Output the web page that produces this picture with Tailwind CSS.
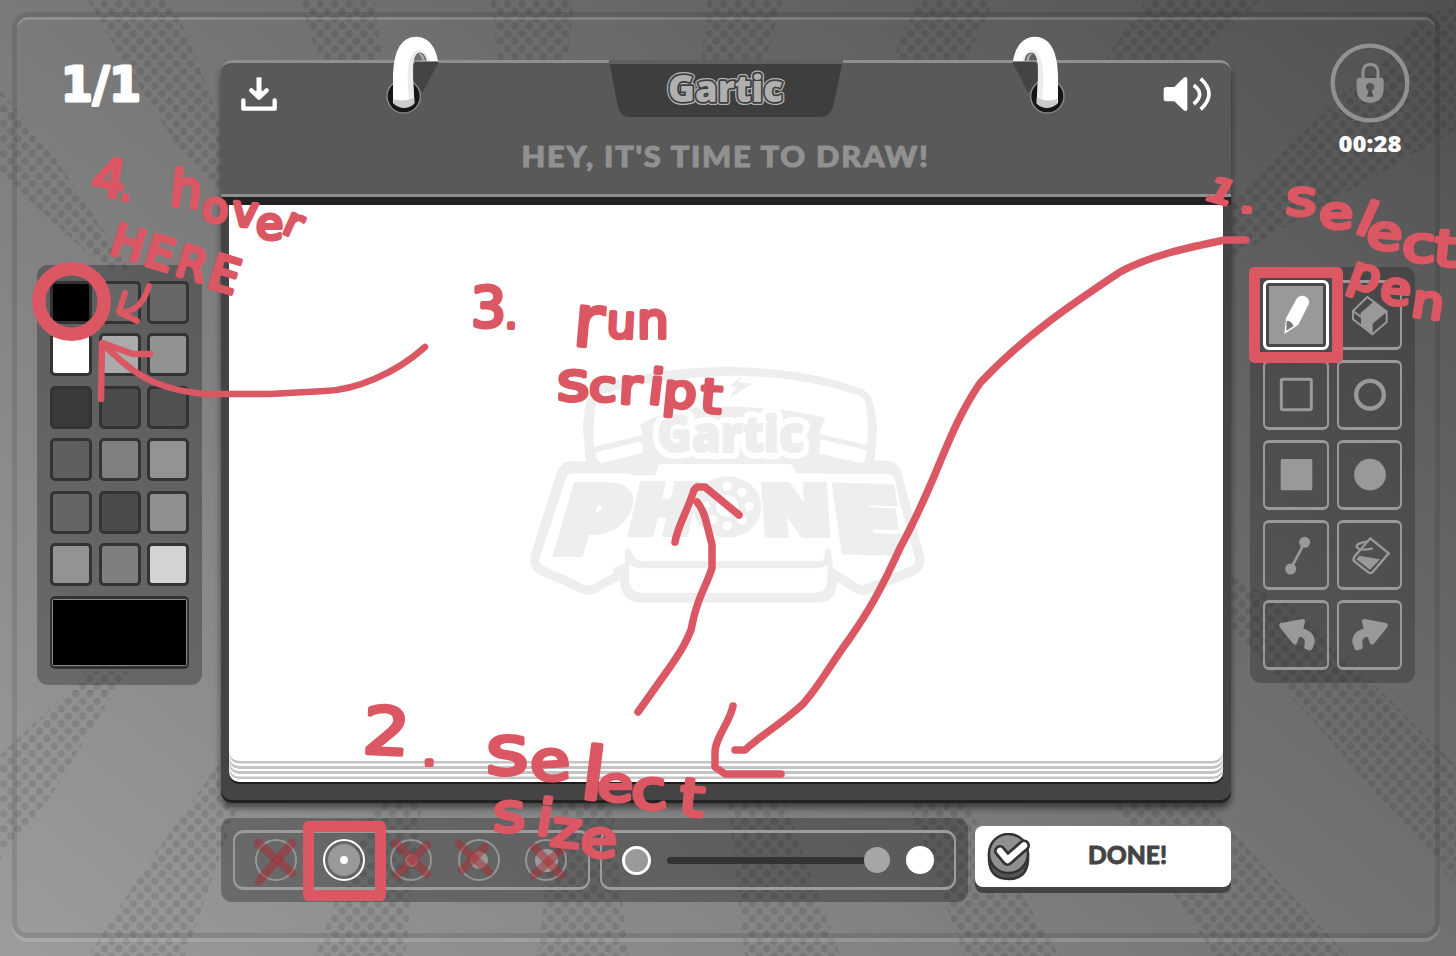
<!DOCTYPE html>
<html lang="en">
<head>
<meta charset="utf-8">
<title>Gartic Phone</title>
<script src="https://cdn.jsdelivr.net/npm/@tailwindcss/browser@4"></script>
</head>
<body class="font-[Lato,'Open_Sans',sans-serif]">
<div class="relative h-[956px] w-[1456px] overflow-hidden bg-[linear-gradient(39deg,#9c9c9c_0%,#505050_100%)]">

  <!-- halftone rays -->
  <svg class="absolute inset-0" width="1456" height="956" viewBox="0 0 1456 956">
    <defs>
      <pattern id="dots" width="14.4" height="15" patternUnits="userSpaceOnUse">
        <g fill="#000" fill-opacity=".1"><circle cx="3.6" cy="3.75" r="3.7"/><circle cx="10.8" cy="11.25" r="3.7"/></g>
      </pattern>
    </defs>
    <g fill="url(#dots)">
      <path d="M88 0H172L197 60L221 125V197L180 150L122 60Z"/>
      <path d="M300 0H375L382 60H318Z"/><path d="M491 0H574L568 60H498Z"/>
      <path d="M708 0H782L766 60H701Z"/><path d="M916 0H995L965 60H893Z"/>
      <path d="M1145 0H1260L1195 60H1105Z"/>
      <path d="M1425 18L1456 0V130L1231 258V200Z"/>
      <path d="M0 90L50 150L130 270L105 268L0 175Z"/>
      <path d="M70 690H115L52 795L0 860V755Z"/><path d="M130 671H85L70 692H113Z"/>
      <path d="M220 762V800H240L185 956H88L150 860Z"/>
      <path d="M375 803H422L405 956H315L350 860Z"/><path d="M555 803H612L628 956H538Z"/>
      <path d="M728 803H785L840 956H745Z"/><path d="M908 803H965L1060 956H965Z"/>
      <path d="M1112 803H1205L1348 956H1215Z"/>
      <path d="M1231 577L1300 610L1456 765V885L1231 627Z"/>
    </g>
  </svg>

  <!-- screen frame -->
  <div class="absolute top-3 right-4 bottom-[18px] left-3 rounded-2xl border-[5px] border-black/10 shadow-[0_4px_0_rgba(255,255,255,0.15),inset_0_3px_0_rgba(255,255,255,0.16)]"></div>

  <main class="relative flex h-full gap-[19px] px-[37px]">
    <!-- left column -->
    <aside class="w-[165px]">
      <div class="flex h-[265px] pt-[48px] pl-[21px]">
        <svg width="88" height="70" viewBox="0 0 88 70"><text x="3" y="52.500" textLength="80" lengthAdjust="spacingAndGlyphs" font-family="DejaVu Sans" font-weight="700" font-size="48" fill="#fff" stroke="#fff" stroke-width="3" stroke-linejoin="round">1/1</text></svg>
      </div>
      <div class="h-[420px] rounded-[11px] bg-black/27 px-[13px] pt-[16px]">
        <div class="grid grid-cols-[42px_42px_42px] gap-x-[6.500px] gap-y-[9.400px]">
          <i class="h-[43px] rounded-[5px] border-[3px] border-[#333] bg-black"></i>
          <i class="h-[43px] rounded-[5px] border-[3px] border-[#333] bg-[#666]"></i>
          <i class="h-[43px] rounded-[5px] border-[3px] border-[#333] bg-[#666]"></i>
          <i class="h-[43px] rounded-[5px] border-[3px] border-[#333] bg-white"></i>
          <i class="h-[43px] rounded-[5px] border-[3px] border-[#333] bg-[#ababab]"></i>
          <i class="h-[43px] rounded-[5px] border-[3px] border-[#333] bg-[#929292]"></i>
          <i class="h-[43px] rounded-[5px] border-[3px] border-[#333] bg-[#3a3a3a]"></i>
          <i class="h-[43px] rounded-[5px] border-[3px] border-[#333] bg-[#4b4b4b]"></i>
          <i class="h-[43px] rounded-[5px] border-[3px] border-[#333] bg-[#505050]"></i>
          <i class="h-[43px] rounded-[5px] border-[3px] border-[#333] bg-[#5f5f5f]"></i>
          <i class="h-[43px] rounded-[5px] border-[3px] border-[#333] bg-[#808080]"></i>
          <i class="h-[43px] rounded-[5px] border-[3px] border-[#333] bg-[#939393]"></i>
          <i class="h-[43px] rounded-[5px] border-[3px] border-[#333] bg-[#656565]"></i>
          <i class="h-[43px] rounded-[5px] border-[3px] border-[#333] bg-[#4b4b4b]"></i>
          <i class="h-[43px] rounded-[5px] border-[3px] border-[#333] bg-[#8f8f8f]"></i>
          <i class="h-[43px] rounded-[5px] border-[3px] border-[#333] bg-[#939393]"></i>
          <i class="h-[43px] rounded-[5px] border-[3px] border-[#333] bg-[#7f7f7f]"></i>
          <i class="h-[43px] rounded-[5px] border-[3px] border-[#333] bg-[#d3d3d3]"></i>
        </div>
        <div class="mt-[10px] h-[73px] w-[139px] rounded-[5px] border-[3px] border-x-2 border-[#333] bg-[#888] p-px"><div class="h-full bg-black"></div></div>
      </div>
    </aside>

    <!-- board column -->
    <section class="w-[1010px] pt-[60px]">
      <div class="relative h-[740px] rounded-[11px] bg-[#444] shadow-[0_3px_0_#222,0_8px_7px_0_rgba(0,0,0,0.5)]">
        <header class="relative h-[137px] rounded-t-[11px] border-y-[3px] border-[#8f8f8f] bg-[#595959]">
          <div class="flex justify-between pr-[18px] pl-[20px]">
            <svg class="mt-[14px]" width="36" height="35" viewBox="723 231 108 105" fill="none" stroke="#fff" stroke-linejoin="round"><path d="M777 232V285" stroke-width="15"/><path d="M754 271L777 293L800 271" stroke-width="13" stroke-linecap="round"/><path d="M765 272H789L777 290Z" fill="#fff" stroke="none"/><path d="M730 301V326H824V301" stroke-width="13" stroke-linecap="round"/></svg>
            <svg class="mt-[14px]" width="50" height="35" viewBox="490 231 150 105" fill="#fff"><path d="M500 261H524L552 233Q563 228 563 238V326Q563 336 552 331L524 304H500Q492 304 492 296V269Q492 261 500 261Z"/><path d="M582 256Q618 282 582 312M603 236Q653 282 603 328" fill="none" stroke="#fff" stroke-width="11"/></svg>
          </div>
          <svg class="absolute -top-[3px] left-[388px]" width="234" height="57" viewBox="0 0 234 57">
            <path d="M0 0H234L224 47Q221 57 211 57H21Q11 57 9 47Z" fill="#3e3e3e"/><path d="M0 0H234L233 4H1Z" fill="#606060"/>
            <g font-family="Open Sans" font-weight="800" font-size="37" stroke-linejoin="round">
              <text x="59" y="42" textLength="115" lengthAdjust="spacingAndGlyphs" fill="#b5b5b5" stroke="#b5b5b5" stroke-width="6">Gartic</text>
              <text x="59" y="42" textLength="115" lengthAdjust="spacingAndGlyphs" fill="#3e3e3e" stroke="#3e3e3e" stroke-width="3.500">Gartic</text>
              <text x="59" y="42" textLength="115" lengthAdjust="spacingAndGlyphs" fill="#b0b0b0">Gartic</text>
            </g>
          </svg>
          <svg class="absolute top-[78px] left-[295px]" width="420" height="36" viewBox="0 0 420 36"><text x="5.500" y="25.500" textLength="408" lengthAdjust="spacingAndGlyphs" letter-spacing="1.6" font-family="Lato" font-weight="900" font-size="27.500" fill="#919191" stroke="#919191" stroke-width="1" stroke-linejoin="round">HEY, IT'S TIME TO DRAW!</text></svg>
        </header>
        <div class="h-2 bg-[#222]"></div>
        <div class="relative mx-2 h-[556px] rounded-b-[10px] bg-white shadow-[0_2.5px_0_#c4c4c4,0_5px_0_#fff,0_8px_0_#c4c4c4,0_10px_0_#fff,0_13px_0_#c4c4c4,0_15.500px_0_#fff,0_18px_0_#c4c4c4,0_21px_0_#fff,0_23px_0_#1c1c1c]">
          <svg class="absolute top-[145px] left-[271px]" width="460" height="280" viewBox="0 0 1380 840">
            <path fill="#eee" d="M258 335L249 240Q250 180 262 145Q270 120 300 106Q460 52 690 51Q930 55 1085 117Q1108 128 1116 150Q1130 200 1131 240L1123 332H1160Q1190 334 1202 360L1272 615Q1280 655 1245 675L1105 732Q1085 740 1065 728L1011 695Q1010 758 950 758H420Q362 756 360 690L285 730Q265 740 245 730L115 672Q85 655 92 615L170 368Q182 335 215 332Z"/>
            <g fill="#fff">
              <path d="M282 288Q278 210 290 155Q294 138 320 130Q500 78 712 77L725 92L755 102L690 145L710 110L700 90ZM712 77Q920 80 1080 138Q1095 145 1098 165Q1108 230 1101 285L960 253Q962 225 978 204Q850 172 690 170Q520 172 408 198Q425 230 428 255L282 290Q276 210 290 155Q294 135 320 128Q500 80 712 77Z"/>
              <path d="M286 307L420 275Q432 280 427 310L305 339Q290 340 286 307ZM960 268L1100 300Q1098 340 1085 340L958 311Z"/>
              <path d="M200 380Q205 370 220 370H380Q395 372 400 376H465L474 350Q478 342 490 342H870Q880 342 888 370H970L990 372H1165Q1180 373 1185 388L1198 450L1245 625Q1248 640 1235 648L1100 703Q1085 708 1070 700L1000 655L992 600Q980 590 975 600V615Q975 633 955 633H425Q400 633 390 595L375 600V640L340 655V670L280 703Q265 710 250 703L125 645Q115 640 119 625Z"/>
              <path d="M388 643Q400 655 430 655H950Q975 653 982 643V695Q978 727 945 729H425Q390 727 387 690Z"/>
            </g>
            <path fill="#eee" d="M725 78L715 95L755 102L688 146L708 112L690 108Z"/>
            <g font-family="Open Sans" font-weight="800" font-size="146" stroke-linejoin="round">
              <text x="472" y="306" textLength="440" lengthAdjust="spacingAndGlyphs" fill="#fff" stroke="#fff" stroke-width="42">Gartic</text>
              <text x="472" y="306" textLength="440" lengthAdjust="spacingAndGlyphs" fill="#eee" stroke="#eee" stroke-width="6">Gartic</text>
            </g>
            <g fill="#eee" stroke="#eee" stroke-width="24" font-family="Open Sans" font-weight="800">
              <text transform="translate(150 610) skewX(-16)" font-size="280" textLength="205" lengthAdjust="spacingAndGlyphs">P</text>
              <text transform="translate(380 550) skewX(-13)" font-size="202" textLength="190" lengthAdjust="spacingAndGlyphs">H</text>
              <text transform="translate(790 552) skewX(4)" font-size="202" textLength="205" lengthAdjust="spacingAndGlyphs">N</text>
              <text transform="translate(1012 600) skewX(8) skewY(2)" font-size="268" textLength="200" lengthAdjust="spacingAndGlyphs">E</text>
            </g>
            <ellipse cx="682" cy="471" rx="102" ry="92" fill="#eee"/>
            <g fill="#fff"><circle cx="682" cy="409" r="14"/><circle cx="726" cy="427" r="14"/><circle cx="748" cy="469" r="14"/><circle cx="726" cy="510" r="14"/><circle cx="682" cy="527" r="14"/><circle cx="638" cy="509" r="14"/><circle cx="617" cy="469" r="14"/><circle cx="639" cy="427" r="14"/><circle cx="682" cy="468" r="33"/></g>
          </svg>
        </div>
        <!-- binder rings -->
        <svg class="absolute -top-[27px] left-[162px]" width="60" height="84" viewBox="1150 100 180 252">
          <g id="ring"><path d="M1245 187H1317L1270 278L1240 260Z" fill="#444"/><circle cx="1212" cy="290" r="50" fill="#161616" stroke="#8c8c8c" stroke-width="4"/><path d="M1180 310V225Q1184 111 1250 111Q1302 113 1315 184H1283Q1278 158 1258 158Q1240 162 1239 215L1244 310Q1225 332 1180 310Z" fill="#fff"/><path d="M1182 298Q1212 310 1244 292V312Q1214 338 1182 312Z" fill="#ccc"/><path d="M1224 250Q1222 156 1256 150Q1276 148 1290 183H1281Q1276 158 1258 158Q1240 162 1239 215L1242 290L1228 298Z" fill="#ececec"/><path d="M1254 161Q1272 160 1276 183H1268Q1265 168 1254 161Z" fill="#aaa"/></g>
        </svg>
        <svg class="absolute -top-[27px] left-[787px] -scale-x-100" width="60" height="84" viewBox="1150 100 180 252"><use href="#ring"/></svg>
      </div>

      <!-- bottom bar -->
      <div class="mt-[18px] flex items-start gap-[7px]">
        <div class="flex h-[84px] w-[747px] gap-[10px] rounded-[11px] bg-black/28 px-3 py-3">
          <div class="flex h-[60px] w-[357px] items-center gap-[25.500px] rounded-[11px] border-x-2 border-y-[3px] border-[#9c9c9c] pl-5">
            <i class="flex size-[42px] items-center justify-center rounded-full border-2 border-[#969696]"><b class="size-[3px] rounded-full bg-[#999]"></b></i>
            <i class="flex size-[42px] items-center justify-center rounded-full border-2 border-white p-[3px]"><b class="flex size-full items-center justify-center rounded-full bg-[#999]"><b class="size-2 rounded-full bg-white"></b></b></i>
            <i class="flex size-[42px] items-center justify-center rounded-full border-2 border-[#969696]"><b class="size-[13px] rounded-full bg-[#999]"></b></i>
            <i class="flex size-[42px] items-center justify-center rounded-full border-2 border-[#969696]"><b class="size-[18px] rounded-full bg-[#999]"></b></i>
            <i class="flex size-[42px] items-center justify-center rounded-full border-2 border-[#969696]"><b class="size-[23px] rounded-full bg-[#999]"></b></i>
          </div>
          <div class="flex h-[60px] w-[357px] items-center rounded-[11px] border-x-2 border-y-[3px] border-[#9c9c9c] pl-[20px]">
            <i class="size-[29px] rounded-full border-[3px] border-white bg-[#999]"></i>
            <i class="ml-4 h-[7px] w-[202px] rounded-full bg-[#333]"></i>
            <i class="-ml-[5px] size-[26px] rounded-full bg-[#a6a6a6]"></i>
            <i class="ml-[16px] size-[28px] rounded-full bg-white"></i>
          </div>
        </div>
        <button class="mt-2 flex h-[61px] w-[256px] items-center rounded-[8px] bg-white pl-[12px] shadow-[0_6px_0_#444]">
          <svg width="44" height="48" viewBox="0 0 44 48"><path d="M2 21.500V27Q3 46 21.500 46Q40 46 41 27V21.500Z" fill="#555" stroke="#333" stroke-width="2.500"/><circle cx="21.500" cy="20.500" r="19.500" fill="#8f8f8f" stroke="#333" stroke-width="2.500"/><path d="M13 18L20.500 27L37 12.500" fill="none" stroke="#333" stroke-width="12" stroke-linecap="round" stroke-linejoin="round"/><path d="M13 18L20.500 27L37 12.500" fill="none" stroke="#fff" stroke-width="6.500" stroke-linecap="round" stroke-linejoin="round"/></svg>
          <svg class="ml-[53px]" width="90" height="34" viewBox="0 0 90 34"><text x="4" y="24" textLength="79" lengthAdjust="spacingAndGlyphs" font-family="Lato" font-weight="900" font-size="24.500" fill="#444" stroke="#444" stroke-width=".8" stroke-linejoin="round">DONE!</text></svg>
        </button>
      </div>
    </section>

    <!-- right column -->
    <aside class="w-[165px]">
      <div class="flex h-[267px] flex-col items-center pt-[43px] pl-[74px]">
        <svg width="80" height="80" viewBox="988 129 240 240"><circle cx="1108" cy="249" r="112" fill="none" stroke="#919191" stroke-width="13"/><path d="M1087 238V213Q1089 194 1109 193Q1130 194 1132 213V238" fill="none" stroke="#919191" stroke-width="9"/><path fill-rule="evenodd" d="M1075 234H1142Q1149 234 1149 241V268Q1147 307 1108 309Q1070 307 1068 268V241Q1068 234 1075 234ZM1104 273L1098 290H1119L1113 273Q1121 269 1121 261Q1119 249 1108 248Q1096 250 1096 261Q1097 270 1104 273Z" fill="#919191"/></svg>
        <div class="mt-[9px]"><svg class="overflow-visible" width="70" height="26" viewBox="0 0 70 26"><text x="3.500" y="20" textLength="63" lengthAdjust="spacingAndGlyphs" font-family="Open Sans" font-weight="800" font-size="23.500" fill="#fff">00:28</text></svg></div>
      </div>
      <div class="grid h-[416px] grid-cols-[66px_65px] content-start gap-x-2 gap-y-[10px] rounded-[11px] bg-black/22 px-[13px] pt-[13px] text-[#999]">
        <div class="flex h-[70px] rounded-[6px] border-[3px] border-white bg-[#999] shadow-[inset_0_0_0_3px_#484848]"><svg class="size-full" viewBox="258 99 180 192"><path d="M313 252L318 205L349 148Q357 134 373 138Q391 145 386 163L355 224Z" fill="#fff"/><path d="M320 212Q334 212 341 228L319 242Z" fill="#777"/></svg></div>
        <div class="h-[70px] rounded-[6px] border-x-2 border-y-[3px]"><svg class="size-full" viewBox="477 99 183 192"><path d="M562 141L620 185V216L577 253L519 208V183Z" fill="none" stroke="currentColor" stroke-width="6" stroke-linejoin="round"/><path d="M582 154L621 185L578 221V255L543 228V196L541 190Z" fill="currentColor"/><path d="M519 183L545 202" fill="none" stroke="currentColor" stroke-width="6"/></svg></div>
        <div class="h-[70px] rounded-[6px] border-x-2 border-y-[3px]"><svg class="size-full" viewBox="255 339 186 192"><rect x="304" y="388" width="90" height="91" rx="4" fill="none" stroke="currentColor" stroke-width="9"/></svg></div>
        <div class="h-[70px] rounded-[6px] border-x-2 border-y-[3px]"><svg class="size-full" viewBox="477 339 183 192"><circle cx="570" cy="434" r="41.500" fill="none" stroke="currentColor" stroke-width="13"/></svg></div>
        <div class="h-[70px] rounded-[6px] border-x-2 border-y-[3px]"><svg class="size-full" viewBox="255 579 186 192"><rect x="302" y="627" width="95" height="94" rx="5" fill="currentColor"/></svg></div>
        <div class="h-[70px] rounded-[6px] border-x-2 border-y-[3px]"><svg class="size-full" viewBox="477 579 183 192"><circle cx="570" cy="674" r="47.500" fill="currentColor"/></svg></div>
        <div class="h-[70px] rounded-[6px] border-x-2 border-y-[3px]"><svg class="size-full" viewBox="255 819 186 192"><path d="M332 957L374 877" stroke="currentColor" stroke-width="8"/><circle cx="374" cy="877" r="16.500" fill="currentColor"/><circle cx="332" cy="957" r="16.500" fill="currentColor"/></svg></div>
        <div class="h-[70px] rounded-[6px] border-x-2 border-y-[3px]"><svg class="size-full" viewBox="477 819 183 192" fill="none" stroke="currentColor" stroke-width="7"><path d="M571 865L626 910L577 967Q571 972 565 967L524 935Q518 930 523 920Z"/><path d="M565 874Q528 880 530 890Q535 904 578 895"/><path d="M538 917L600 928L570 959L529 928Z" fill="currentColor" stroke="none"/></svg></div>
        <div class="h-[70px] rounded-[6px] border-x-2 border-y-[3px]"><svg class="size-full" viewBox="255 1059 186 192"><path d="M302 1119L368 1107Q376 1107 375 1115L370 1136Q405 1145 404 1177L398 1195Q395 1202 387 1201L376 1197Q371 1194 373 1188Q380 1162 358 1160L351 1180Q346 1188 339 1181L299 1131Q295 1122 302 1119Z" fill="currentColor"/></svg></div>
        <div class="h-[70px] rounded-[6px] border-x-2 border-y-[3px]"><svg class="size-full" viewBox="477 1059 183 192"><path d="M619 1119L553 1107Q545 1107 546 1115L551 1136Q516 1145 517 1177L523 1195Q526 1202 534 1201L545 1197Q550 1194 548 1188Q541 1162 563 1160L570 1180Q575 1188 582 1181L622 1131Q626 1122 619 1119Z" fill="currentColor"/></svg></div>
      </div>
    </aside>
  </main>

  <!-- red marker annotations -->
  <svg class="absolute inset-0" width="1456" height="956" viewBox="0 0 1456 956">
    <g fill="none" stroke="#da5763" stroke-width="7.500" stroke-linecap="round" stroke-linejoin="round">
      <path d="M1246 240H1225C1185 248 1150 256 1120 272C1075 302 1025 335 980 383C945 435 940 475 900 548C880 592 868 612 850 638C830 665 820 685 803 704C780 725 765 732 745 750H735"/>
      <path d="M733 706C730 722 715 738 715 752V767L725 774H781"/>
      <path d="M638 712L670 667C680 652 685 645 691 630C698 595 704 592 712 568V545C706 520 704 510 697 502M675 542C678 525 688 510 694 490L697 487H705L739 515"/>
      <path d="M425 347C395 374 355 390 325 391L270 394H205C150 389 130 370 104 345M150 354H133L102 343L101 399" stroke-width="6.500"/>
      <path d="M149 286C143 305 135 311 120 313M125 293L119 312L137 321" stroke-width="6"/>
      <circle cx="71.500" cy="301.500" r="32.700" stroke-width="13.500"/>
      <rect x="1254.500" y="272.500" width="83" height="85" stroke-width="11"/>
      <rect x="308.500" y="826.500" width="72" height="69" stroke-width="11"/>
    </g>
    <g stroke="#aa2c34" stroke-opacity=".5" stroke-width="8.500" stroke-linecap="round" fill="none">
      <path d="M258 843L292 873"/><path d="M292 843L259 881"/>
      <path d="M396 843L427 874"/><path d="M427 845L397 875"/>
      <path d="M459 844L489 872"/><path d="M485 847L462 870"/>
      <path d="M534 847L561 875"/><path d="M563 848L534 875"/>
    </g>
    <g font-family="DejaVu Sans" fill="#da5763" stroke="#da5763" stroke-width="4" stroke-linejoin="round">
      <text><tspan x="90" y="193" font-size="52" rotate="10">4</tspan><tspan x="119" y="200" font-size="38">.</tspan></text>
      <text><tspan x="169" y="205" font-size="50" rotate="6">h</tspan><tspan x="202" y="222" font-size="43">o</tspan><tspan x="231" y="225" font-size="43" rotate="6">v</tspan><tspan x="256" y="239" font-size="44">e</tspan><tspan x="281" y="232" font-size="40" rotate="24">r</tspan></text>
      <text><tspan x="108" y="253" font-size="44" rotate="17">H</tspan><tspan x="142" y="264" font-size="44" rotate="17">E</tspan><tspan x="173" y="274" font-size="44" rotate="17">R</tspan><tspan x="205" y="286" font-size="48" rotate="17">E</tspan></text>
      <text transform="translate(1203 198) scale(1.35 1)"><tspan x="0" y="0" font-size="32" rotate="22">1</tspan><tspan x="26.500" y="14" font-size="36">.</tspan></text>
      <text transform="translate(1285 0) scale(1.22 1)"><tspan x="0" y="214" font-size="48" rotate="4">s</tspan><tspan x="28" y="228" font-size="45">e</tspan><tspan x="56" y="232" font-size="46" rotate="20">l</tspan><tspan x="66" y="248" font-size="47" rotate="5">e</tspan><tspan x="96" y="262" font-size="50">c</tspan><tspan x="121" y="265" font-size="50" rotate="5">t</tspan></text>
      <text transform="translate(1345 0) scale(1.1 1)"><tspan x="1" y="285" font-size="44" rotate="18">p</tspan><tspan x="31" y="303" font-size="45" rotate="5">e</tspan><tspan x="59" y="316" font-size="46" rotate="8">n</tspan></text>
      <text><tspan x="471" y="326" font-size="55">3</tspan><tspan x="505" y="328" font-size="38">.</tspan></text>
      <text><tspan x="572" y="345" font-size="72" rotate="5">r</tspan><tspan x="606" y="337" font-size="46" rotate="3">u</tspan><tspan x="637" y="338" font-size="50">n</tspan></text>
      <text transform="translate(557 0) scale(1.15 1)"><tspan x="0" y="400" font-size="54">s</tspan><tspan x="28" y="401" font-size="43">c</tspan><tspan x="53" y="403" font-size="48" rotate="3">r</tspan><tspan x="78" y="403" font-size="48" rotate="6">i</tspan><tspan x="91" y="406" font-size="46" rotate="5">p</tspan><tspan x="124" y="412" font-size="47" rotate="4">t</tspan></text>
      <text transform="translate(362 0) scale(1.12 1)"><tspan x="0" y="753" font-size="65" rotate="3">2</tspan><tspan x="54" y="765" font-size="38">.</tspan></text>
      <text transform="translate(486 0) scale(1.2 1)"><tspan x="0" y="774" font-size="68">s</tspan><tspan x="38" y="781" font-size="54" rotate="-4">e</tspan><tspan x="77" y="798" font-size="72" rotate="6">l</tspan><tspan x="93" y="801" font-size="48">e</tspan><tspan x="122" y="810" font-size="54" rotate="-4">c</tspan><tspan x="160" y="815" font-size="52" rotate="5">t</tspan></text>
      <text transform="translate(493 0) scale(1.15 1)"><tspan x="0" y="831" font-size="54">s</tspan><tspan x="36" y="834" font-size="50" rotate="8">i</tspan><tspan x="49" y="845" font-size="50" rotate="7">z</tspan><tspan x="76" y="857" font-size="52">e</tspan></text>
    </g>
  </svg>
</div>
</body>
</html>
